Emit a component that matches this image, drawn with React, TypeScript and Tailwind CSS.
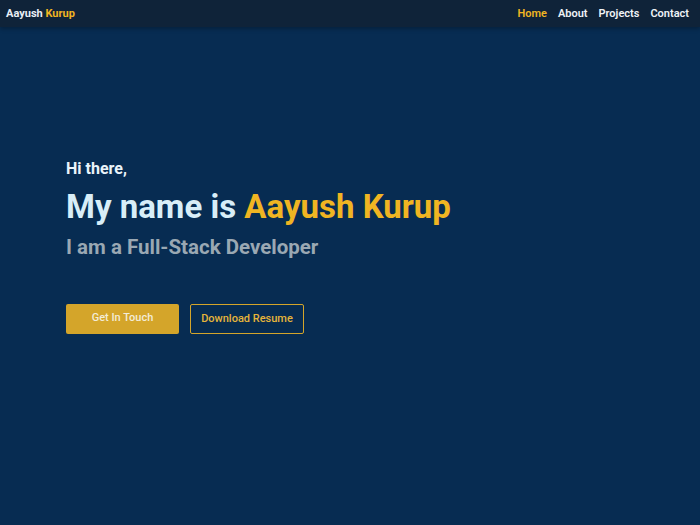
import React from 'react';

const links = ['Home', 'About', 'Projects', 'Contact'];

export default function App() {
  return (
    <div className="min-h-[525px] w-full bg-[#072c52] font-['Roboto',sans-serif] flex flex-col">
      {/* Navbar */}
      <header className="h-[27px] bg-[#0f2339] flex items-center justify-between pl-[6px] pr-[11px] pt-[1px] shadow-[0_2px_4px_rgba(0,0,0,0.25)]">
        <div className="text-[11px] font-bold text-[#e8eef4]">
          Aayush <span className="text-[#f0b522]">Kurup</span>
        </div>
        <nav className="flex items-center gap-[11px] text-[11px] font-semibold">
          {links.map((l, i) => (
            <a key={l} className={i === 0 ? 'text-[#f0b522]' : 'text-[#eef2f6]'}>
              {l}
            </a>
          ))}
        </nav>
      </header>

      {/* Hero */}
      <main className="flex-1 pl-[66px] pt-[131px]">
        <p className="text-[16px] font-bold text-[#eaf4fa] leading-[22px]">Hi there,</p>
        <h1 className="mt-[8px] text-[33px] font-bold leading-[38px] text-[#d8eef8]">
          My name is <span className="text-[#f0b522]">Aayush Kurup</span>
        </h1>
        <h2 className="mt-[8px] text-[20.5px] font-bold leading-[26px] text-[#9aa8b3]">
          I am a Full-Stack Developer
        </h2>
        <div className="mt-[44px] flex gap-[11px]">
          <button className="w-[113px] h-[30px] rounded-[2px] bg-[#d4a52a] text-[11px] font-medium text-[#f3ecd8] pb-[2px]">
            Get In Touch
          </button>
          <button className="w-[114px] h-[30px] rounded-[2px] border-[1.5px] border-[#d4a52a] text-[11px] font-medium text-[#e6b53a]">
            Download Resume
          </button>
        </div>
      </main>
    </div>
  );
}
